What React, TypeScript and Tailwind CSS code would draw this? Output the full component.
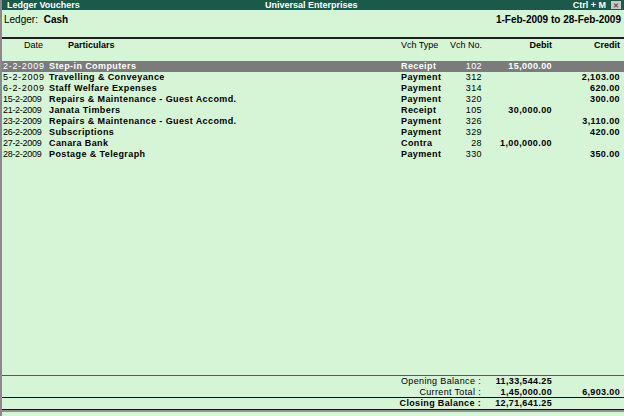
type Voucher = {
  date: string;
  particulars: string;
  type: string;
  no: string;
  debit?: string;
  credit?: string;
};

const vouchers: Voucher[] = [
  { date: "2-2-2009", particulars: "Step-in Computers", type: "Receipt", no: "102", debit: "15,000.00" },
  { date: "5-2-2009", particulars: "Travelling & Conveyance", type: "Payment", no: "312", credit: "2,103.00" },
  { date: "6-2-2009", particulars: "Staff Welfare Expenses", type: "Payment", no: "314", credit: "620.00" },
  { date: "15-2-2009", particulars: "Repairs & Maintenance - Guest Accomd.", type: "Payment", no: "320", credit: "300.00" },
  { date: "21-2-2009", particulars: "Janata Timbers", type: "Receipt", no: "105", debit: "30,000.00" },
  { date: "23-2-2009", particulars: "Repairs & Maintenance - Guest Accomd.", type: "Payment", no: "326", credit: "3,110.00" },
  { date: "26-2-2009", particulars: "Subscriptions", type: "Payment", no: "329", credit: "420.00" },
  { date: "27-2-2009", particulars: "Canara Bank", type: "Contra", no: "28", debit: "1,00,000.00" },
  { date: "28-2-2009", particulars: "Postage & Telegraph", type: "Payment", no: "330", credit: "350.00" },
];

const cols = "grid grid-cols-[44px_355px_54px_27px_70px_68px]";

function VoucherRow({ v, selected }: { v: Voucher; selected: boolean }) {
  return (
    <div
      className={`${cols} h-[11px] items-center leading-[11px] tracking-[0.4px] ${
        selected ? "bg-[#7b7b7b] text-white" : "text-black"
      }`}
    >
      <span
        className={`overflow-hidden whitespace-nowrap pl-[1px] ${
          v.date.length > 8 ? "tracking-[-0.3px]" : "tracking-[0.7px]"
        }`}
      >
        {v.date}
      </span>
      <span className="pl-[3px] font-bold">{v.particulars}</span>
      <span className="font-bold">{v.type}</span>
      <span className="text-right">{v.no}</span>
      <span className="text-right font-bold">{v.debit}</span>
      <span className="text-right font-bold">{v.credit}</span>
    </div>
  );
}

export default function App() {
  return (
    <div className="flex h-[416px] w-[624px] flex-col overflow-hidden border-l-2 border-[#8a8a8a] bg-[#d6f4d6] font-['Liberation_Sans',Arial,sans-serif] text-[9px] text-black">
      {/* title bar */}
      <div className="flex h-[10px] items-center bg-[#1b5a4a] pl-[5px] pr-[3px] text-[9px] font-bold leading-[10px] text-white">
        <span className="w-[256px]">Ledger Vouchers</span>
        <span className="flex-1 pl-[2px]">Universal Enterprises</span>
        <span className="mr-[5px]">Ctrl + M</span>
        <span className="flex h-[8px] w-[10px] items-center justify-center bg-[#c8c8c8] text-[7px] leading-none text-[#555]">
          ✕
        </span>
      </div>

      {/* ledger + period */}
      <div className="flex h-[18px] items-center justify-between pl-[2px] pr-[3px] text-[10px]">
        <span>
          Ledger: <span className="ml-[3px] font-bold">Cash</span>
        </span>
        <span className="font-bold">1-Feb-2009 to 28-Feb-2009</span>
      </div>

      <div className="mt-[9px] border-t-2 border-[#1e1e1e]" />

      {/* column headings */}
      <div className={`${cols} h-[12px] items-center leading-[12px]`}>
        <span className="pr-[3px] text-right">Date</span>
        <span className="pl-[22px] font-bold">Particulars</span>
        <span>Vch Type</span>
        <span className="-ml-[6px] text-right">Vch No.</span>
        <span className="text-right font-bold">Debit</span>
        <span className="text-right font-bold">Credit</span>
      </div>

      {/* vouchers */}
      <div className="mt-[10px] flex-1">
        {vouchers.map((v, i) => (
          <VoucherRow key={v.date + v.no} v={v} selected={i === 0} />
        ))}
      </div>

      {/* totals */}
      <div className="border-t border-[#5a5a5a] tracking-[0.35px]">
        <div className={`${cols} h-[11px] items-center leading-[11px]`}>
          <span className="col-span-4 pr-[1px] text-right">Opening Balance :</span>
          <span className="text-right font-bold">11,33,544.25</span>
          <span />
        </div>
        <div className={`${cols} h-[10px] items-center leading-[10px]`}>
          <span className="col-span-4 pr-[1px] text-right">Current Total :</span>
          <span className="text-right font-bold">1,45,000.00</span>
          <span className="text-right font-bold">6,903.00</span>
        </div>
        <div className={`${cols} h-[12px] items-center border-t border-[#111] leading-[11px]`}>
          <span className="col-span-4 pr-[1px] text-right font-bold">Closing Balance :</span>
          <span className="text-right font-bold">12,71,641.25</span>
          <span />
        </div>
        <div className="border-t border-[#111]" />
        <div className="h-[2px] bg-[#8a9a8a]" />
        <div className="h-[4px]" />
      </div>
    </div>
  );
}
